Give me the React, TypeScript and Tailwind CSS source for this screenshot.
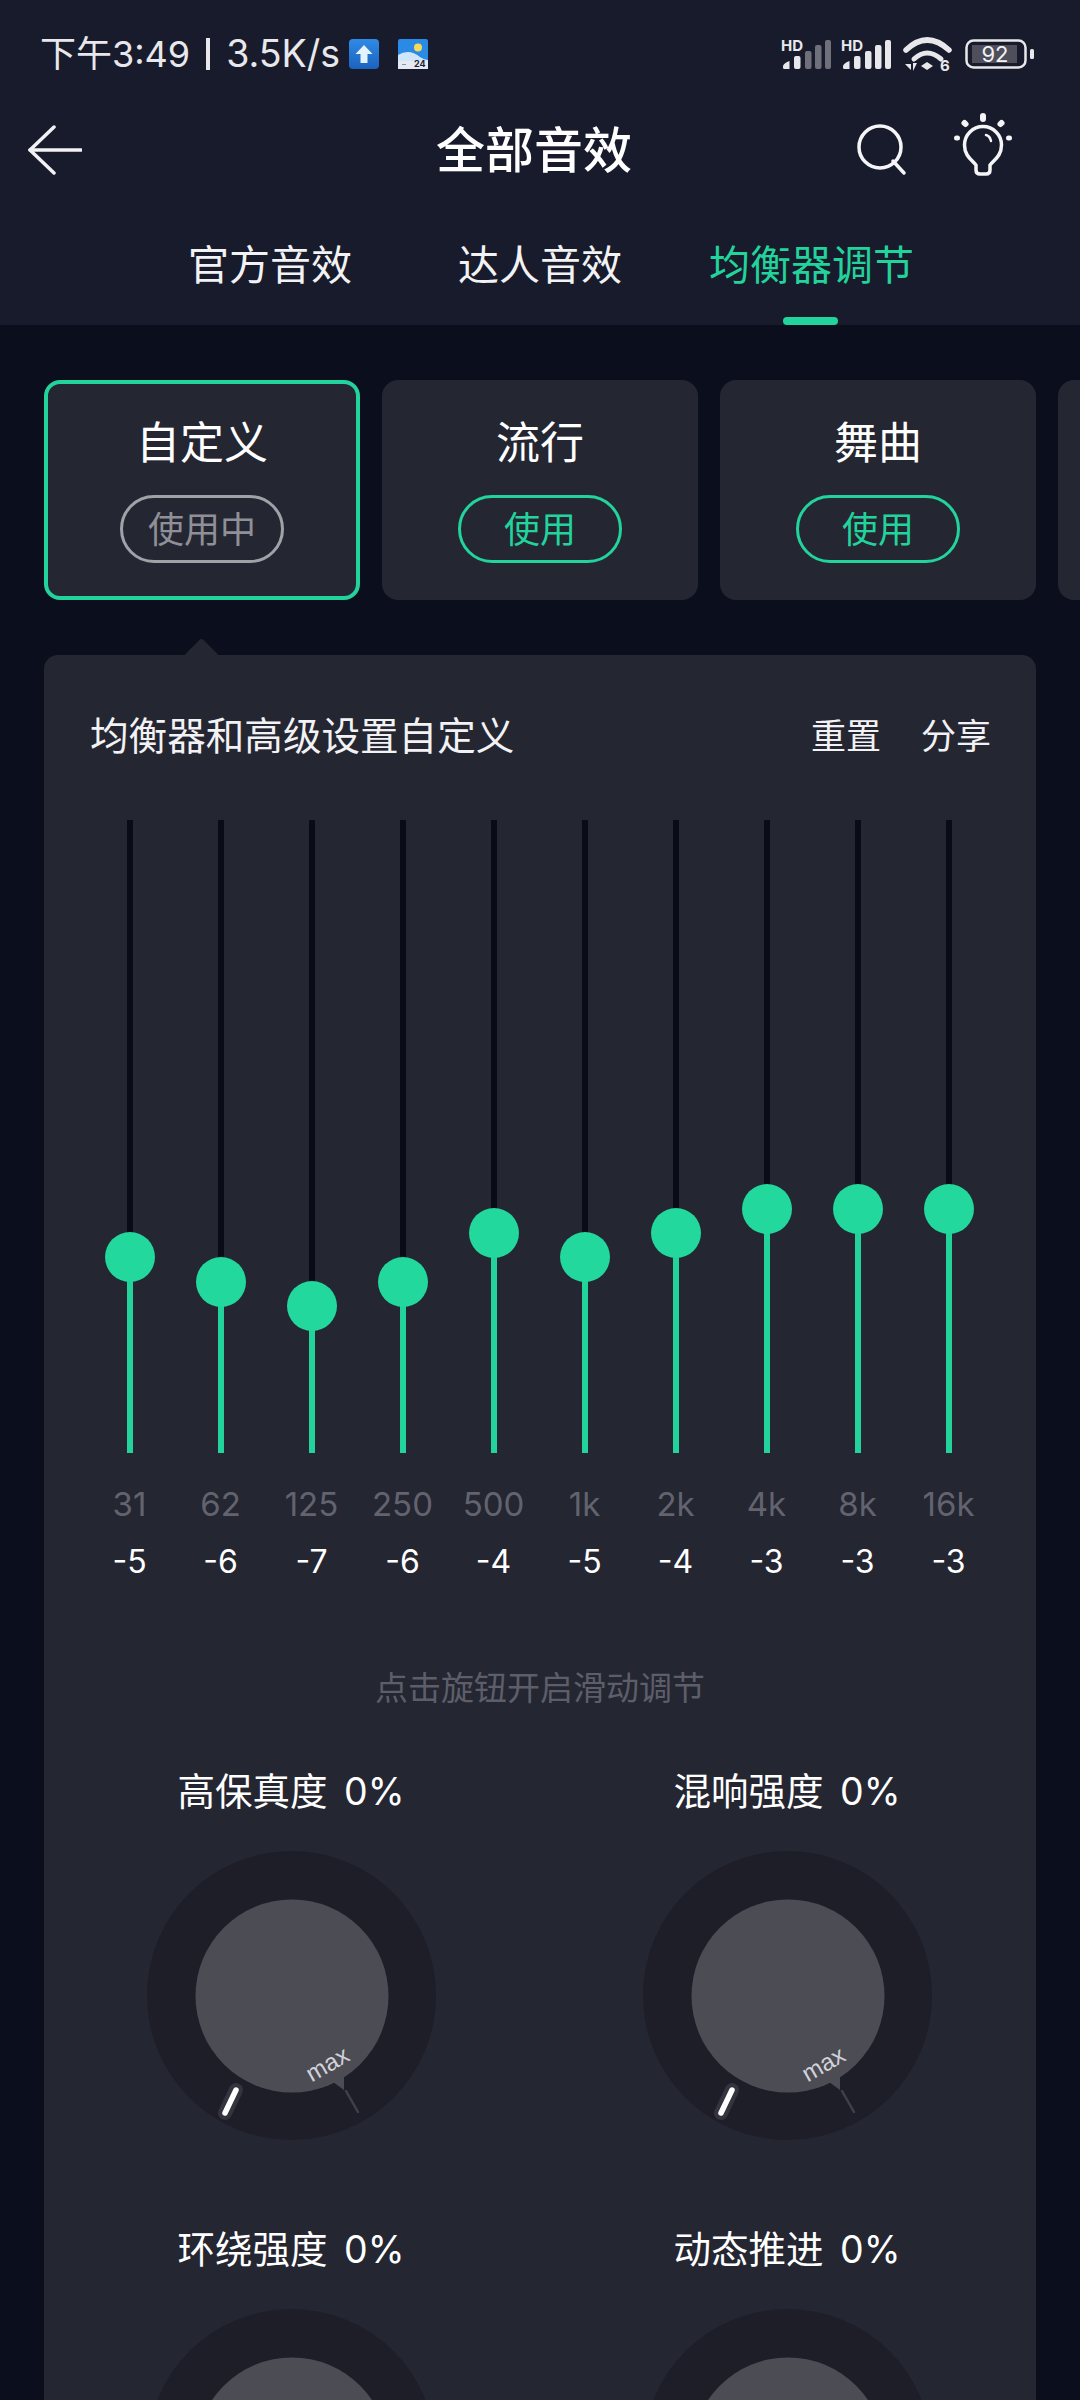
const GREEN = '#22d39b';

const bands = [
  { freq: '31', gain: -5, thumb: 437 },
  { freq: '62', gain: -6, thumb: 462 },
  { freq: '125', gain: -7, thumb: 486 },
  { freq: '250', gain: -6, thumb: 462 },
  { freq: '500', gain: -4, thumb: 413 },
  { freq: '1k', gain: -5, thumb: 437 },
  { freq: '2k', gain: -4, thumb: 413 },
  { freq: '4k', gain: -3, thumb: 389 },
  { freq: '8k', gain: -3, thumb: 389 },
  { freq: '16k', gain: -3, thumb: 389 },
];

const Signal = ({ weak }: { weak?: boolean }) => {
  const dim = weak ? '#6f707a' : '#e8e8ec';
  return (
    <svg width="50" height="32" viewBox="0 0 50 32" className="overflow-visible">
      <text x="0" y="13" fontSize="15" fontWeight="700" fill="#e8e8ec" fontFamily="Inter, sans-serif">HD</text>
      <path d="M3 31 a1.5 1.5 0 0 1 -1 -1.5 V28 Q3 25 8.500 23 V31 Z" fill="#e8e8ec" />
      <rect x="13" y="18" width="6.500" height="13" rx="2" fill="#e8e8ec" />
      <rect x="24" y="13" width="6.500" height="18" rx="2" fill={dim} />
      <rect x="34" y="7" width="6.500" height="24" rx="2" fill={dim} />
      <rect x="44" y="2" width="6" height="29" rx="2" fill={dim} />
    </svg>
  );
};

const Wifi = () => (
  <svg width="50" height="36" viewBox="0 0 50 36" fill="none" className="overflow-visible">
    <path d="M3 14 Q24 -6 46 14" stroke="#e8e8ec" strokeWidth="5.500" strokeLinecap="round" />
    <path d="M11 23 Q24 11 38 23" stroke="#e8e8ec" strokeWidth="5" strokeLinecap="round" />
    <path d="M18 30 L24 26 L30 30 L24 34 Z" fill="#e8e8ec" />
    <path d="M2 28 H8 V34 Z M10 35 V27 L14 27 Z" fill="#e8e8ec" />
    <text x="37" y="35" fontSize="15" fontWeight="700" fill="#e8e8ec" fontFamily="Inter, sans-serif">6</text>
  </svg>
);

const Battery = () => (
  <svg width="70" height="30" viewBox="0 0 70 30" className="overflow-visible">
    <rect x="1.500" y="1.500" width="59" height="27" rx="7" fill="none" stroke="#e8e8ec" strokeWidth="2.500" />
    <rect x="7" y="6" width="45" height="18" fill="#4e4f5b" />
    <text x="30" y="23" fontSize="22" textAnchor="middle" fill="#f2f2f4" fontFamily="Inter, sans-serif">92</text>
    <rect x="65" y="10" width="4" height="10" rx="1.500" fill="#e8e8ec" />
  </svg>
);

const UploadBadge = () => (
  <svg width="30" height="30" viewBox="0 0 30 30">
    <defs>
      <linearGradient id="upload-bg" x1="0" y1="0" x2="0" y2="1">
        <stop offset="0" stopColor="#2f8be6" />
        <stop offset="1" stopColor="#1c62bd" />
      </linearGradient>
    </defs>
    <rect width="30" height="30" rx="4" fill="url(#upload-bg)" />
    <path d="M15 6 L23.500 15 H18.500 V24 H11.500 V15 H6.500 Z" fill="#e4f3fe" />
  </svg>
);

const WeatherBadge = () => (
  <svg width="30" height="30" viewBox="0 0 30 30" className="overflow-visible">
    <rect width="30" height="30" rx="2" fill="#2b8ae6" />
    <circle cx="20" cy="8.500" r="4" fill="#f4dc5a" />
    <path d="M0 16 Q11 9 22 18 Q26 21 30 21 V30 H0 Z" fill="#cfe6fa" />
    <path d="M0 22 H30 V28 Q30 30 28 30 H2 Q0 30 0 28 Z" fill="#e4e9f2" />
    <text x="16" y="28" fontSize="9" fontWeight="700" fill="#1b2233" fontFamily="Inter, sans-serif">24</text>
    <rect x="4" y="25" width="4" height="1" fill="#8a93a5" />
  </svg>
);

const BackArrow = () => (
  <svg width="54" height="50" viewBox="0 0 54 50" fill="none" stroke="#f2f2f4" strokeWidth="3.500" strokeLinecap="round" strokeLinejoin="round">
    <path d="M53 25 H2" />
    <path d="M26 2 L2 25 L26 48" />
  </svg>
);

const SearchIcon = () => (
  <svg width="50" height="52" viewBox="0 0 50 52" fill="none" stroke="#f5f5f7" strokeWidth="3.500" strokeLinecap="round">
    <circle cx="23" cy="23" r="21" />
    <path d="M36 37 L47 49" />
  </svg>
);

const BulbIcon = () => (
  <svg width="64" height="68" viewBox="0 0 64 68" fill="none" stroke="#f5f5f7" strokeLinecap="round">
    <path
      d="M25 55 C21 50 13.500 46 13.500 35 A18.500 18.500 0 1 1 50.500 35 C50.500 46 43 50 39 55 V60 Q39 64 35 64 H29 Q25 64 25 60 Z"
      strokeWidth="3.500"
      strokeLinejoin="round"
    />
    <path d="M35 25 Q39 26 40 31" strokeWidth="2.500" />
    <path d="M32 6 V9" strokeWidth="6" />
    <path d="M13.500 13 L14.500 14" strokeWidth="6" />
    <path d="M50.500 13 L49.500 14" strokeWidth="6" />
    <path d="M5.500 28 H6.500" strokeWidth="5" />
    <path d="M57.500 28 H58.500" strokeWidth="5" />
  </svg>
);

const Knob = () => (
  <svg width="289" height="289" viewBox="0 0 289 289">
    <circle cx="144.500" cy="144.500" r="144.500" fill="#1e1e28" />
    <circle cx="145" cy="145" r="96.500" fill="#4c4c55" />
    <path d="M186 231 L197 225 V239 Z" fill="#4c4c55" />
    <path d="M199 240 L211 261" stroke="#3f404a" strokeWidth="2.500" strokeLinecap="round" />
    <path d="M89 239 L78 262" stroke="#34343e" strokeWidth="14" strokeLinecap="round" />
    <path d="M89 239 L78 262" stroke="#ffffff" strokeWidth="5.500" strokeLinecap="round" />
    <text
      x="181"
      y="221"
      fontSize="24"
      textAnchor="middle"
      fill="#d2d2d6"
      fontFamily="'Liberation Sans', sans-serif"
      transform="rotate(-30 181 214)"
    >
      max
    </text>
  </svg>
);

const KnobCell = ({ label }: { label: string }) => (
  <div className="flex flex-col items-center pr-[2px]">
    <div className="h-[56px] text-[37.500px] leading-[56px] text-white whitespace-pre [word-spacing:6px]">{label}</div>
    <div className="mt-[31px]">
      <Knob />
    </div>
  </div>
);

const PresetCard = ({ name, active }: { name: string; active?: boolean }) => (
  <div
    className={
      active
        ? 'flex h-[220px] w-[316px] shrink-0 flex-col items-center rounded-[16px] border-[4px] border-[#22d39b] bg-[#242632] pt-[30px]'
        : 'flex h-[220px] w-[316px] shrink-0 flex-col items-center rounded-[16px] bg-[#242632] pt-[34px]'
    }
  >
    <div className="h-[58px] text-[44px] leading-[58px] text-white">{name}</div>
    <div
      className={
        active
          ? 'mt-[23px] flex h-[68px] w-[164px] items-center justify-center rounded-full border-[3px] border-[#a1a1a8] pt-[2px] text-[36px] text-[#8f9097]'
          : 'mt-[23px] flex h-[68px] w-[164px] items-center justify-center rounded-full border-[3px] border-[#22d39b] pt-[2px] text-[36px] text-[#22d39b]'
      }
    >
      {active ? '使用中' : '使用'}
    </div>
  </div>
);

const Band = ({ freq, gain, thumb }: { freq: string; gain: number; thumb: number }) => (
  <div className="flex w-[91px] flex-col items-center">
    <div className="relative flex h-[633px] w-[6px] flex-col">
      <div className="bg-[#090b17]" style={{ height: thumb }} />
      <div className="flex-1" style={{ backgroundColor: GREEN }} />
      <div
        className="absolute left-[-22px] h-[50px] w-[50px] rounded-full bg-[#23d89d]"
        style={{ top: thumb - 25 }}
      />
    </div>
    <div className="mt-[29px] h-[44px] text-[33px] font-normal leading-[44px] text-[#62636e]">{freq}</div>
    <div className="mt-[14px] h-[44px] text-[32px] leading-[44px] text-white">{gain}</div>
  </div>
);

export default function App() {
  return (
    <div className="flex h-[2400px] w-[1080px] flex-col overflow-hidden bg-[#0b0e1c] font-[Inter,'Noto_Sans_CJK_SC',sans-serif]">
      {/* 顶部 */}
      <header className="h-[325px] shrink-0 bg-[#181b2b]">
        <div className="flex h-[108px] items-center pl-[40px] pr-[45px]">
          <span className="text-[36px] leading-none text-[#e8e8ec]">下午3:49</span>
          <span className="ml-[16px] h-[32px] w-[4px] bg-[#e8e8ec]" />
          <span className="ml-[16px] text-[37.500px] leading-none text-[#e8e8ec]">3.5K/s</span>
          <span className="ml-[9px]">
            <UploadBadge />
          </span>
          <span className="ml-[19px]">
            <WeatherBadge />
          </span>
          <div className="ml-auto flex items-center gap-[12px]">
            <Signal weak />
            <span className="ml-[-2px]">
              <Signal />
            </span>
            <Wifi />
            <Battery />
          </div>
        </div>

        <div className="flex h-[84px] items-center pl-[28px] pr-[65px]">
          <BackArrow />
          <div className="ml-[354px] text-[49px] font-medium leading-none text-white">全部音效</div>
          <div className="ml-auto flex items-center gap-[44px]">
            <SearchIcon />
            <div className="mt-[-12px]">
              <BulbIcon />
            </div>
          </div>
        </div>

        <div className="relative flex h-[133px] pl-[188px] pt-[43px] text-[41px] leading-[60px] text-[#f2f2f4]">
          <span>官方音效</span>
          <span className="ml-[106px]">达人音效</span>
          <span className="ml-[87px] text-[#22d39b]">均衡器调节</span>
          <span className="absolute bottom-0 left-[783px] h-[8px] w-[55px] rounded-full bg-[#22d39b]" />
        </div>
      </header>

      {/* 预设 */}
      <div className="flex shrink-0 gap-[22px] pl-[44px] pt-[55px]">
        <PresetCard name="自定义" active />
        <PresetCard name="流行" />
        <PresetCard name="舞曲" />
        <div className="h-[220px] w-[316px] shrink-0 rounded-[16px] bg-[#242632]" />
      </div>

      {/* 均衡器面板 */}
      <section className="relative mx-[44px] mt-[55px] flex-1 rounded-t-[14px] bg-[#242632]">
        <div className="absolute left-[145px] top-[-12px] h-[25px] w-[25px] rotate-45 rounded-[3px] bg-[#242632]" />
        <div className="flex h-[165px] items-start pl-[46px] pr-[45px] pt-[53px] leading-[56px] text-[#f2f2f4]">
          <span className="text-[38.600px]">均衡器和高级设置自定义</span>
          <span className="ml-auto text-[35px]">重置</span>
          <span className="ml-[40px] text-[35px]">分享</span>
        </div>

        <div className="flex pl-[40px]">
          {bands.map((b) => (
            <Band key={b.freq} {...b} />
          ))}
        </div>

        <div className="mt-[79px] h-[50px] text-center text-[33px] leading-[50px] text-[#5d5e69]">点击旋钮开启滑动调节</div>

        <div className="mt-[51px] grid grid-cols-2 gap-y-[82px]">
          <KnobCell label="高保真度 0%" />
          <KnobCell label="混响强度 0%" />
          <KnobCell label="环绕强度 0%" />
          <KnobCell label="动态推进 0%" />
        </div>
      </section>
    </div>
  );
}
